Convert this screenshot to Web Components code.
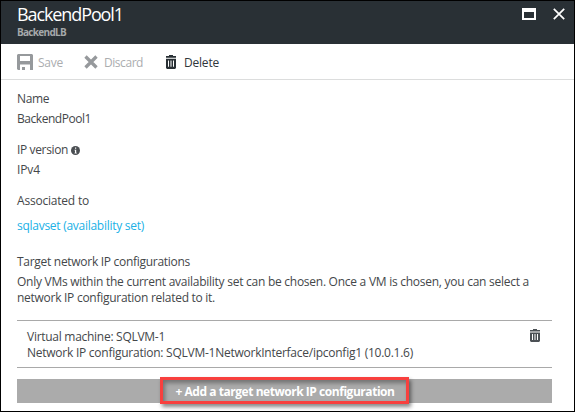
<!DOCTYPE html>
<html lang="en"><head><meta charset="utf-8"><title>BackendPool1</title>
<style>body{margin:0;background:#fff}</style></head><body>
<pool-blade></pool-blade>
<script>
// One line of text, tracked so that it spans the width given in its "w" attribute.
class FitText extends HTMLElement{
  connectedCallback(){
    if(this.shadowRoot)return;
    this.attachShadow({mode:'open'}).innerHTML=`<style>:host{display:block;white-space:nowrap;width:max-content}span{display:inline-block}</style><span><slot></slot></span>`;
    const s=this.shadowRoot.querySelector('span'),w=+this.getAttribute('w'),n=this.textContent.length;
    s.style.letterSpacing=((w-s.getBoundingClientRect().width)/n)+'px';
  }
}
const icons={
  save:[16,16,'<path fill="currentColor" fill-rule="evenodd" d="M1 0H15L16 1V16H12V13H11V16H9V13H7V16H4V11H13V10H3V16H1L0 15V1ZM3 2V7H13V2Z"/><path fill="currentColor" d="M3 10H13V16H10.500V12.500H5V16H3Z"/><path fill="#fff" d="M3 10.500H13V16H8V13H5.500V16H3Z"/><path fill="currentColor" d="M5 13H8V16H5Z"/>'],
  discard:[14,14,'<path stroke="currentColor" stroke-width="3.300" d="M1.500 1.500L12.500 12.500M12.500 1.500L1.500 12.500"/>'],
  trash:[10,13,'<path fill="currentColor" fill-rule="evenodd" d="M3 0H7V1H10V2.500H0V1H3ZM0 3.500H10V12L9 13H1L0 12ZM2 5V11H3V5ZM4.500 5V11H5.500V5ZM7 5V11H8V5Z"/>'],
  info:[9,9,'<circle cx="4.500" cy="4.500" r="4.500" fill="currentColor"/><path fill="#fff" d="M4 1.500H5.200V2.700H4ZM3.500 3.700H5.200V6.700H5.800V7.400H3.500V6.700H4V4.400H3.500Z"/>'],
  max:[14,12,'<path fill="currentColor" fill-rule="evenodd" d="M0 0H14V12H0ZM2 4V10H12V4Z"/>'],
  close:[12,12,'<path stroke="currentColor" stroke-width="1.700" d="M.8 .8L11.200 11.200M11.200 .8L.8 11.200"/>']
};
class UiIcon extends HTMLElement{
  connectedCallback(){
    const [w,h,p]=icons[this.getAttribute('name')],W=this.getAttribute('w')||w,H=this.getAttribute('h')||h;
    if(!this.shadowRoot)this.attachShadow({mode:'open'}).innerHTML=`<style>:host{display:block;flex:none}svg{display:block}</style><svg width="${W}" height="${H}" viewBox="0 0 ${w} ${h}" preserveAspectRatio="none" fill="none">${p}</svg>`;
  }
}
class BladeHeader extends HTMLElement{
  constructor(){super();this.attachShadow({mode:'open'}).innerHTML=`<style>
  :host{display:flex;box-sizing:border-box;height:43px;background:#293035;color:#fff;padding:1px 9px 0 16px}
  .t{flex:1}.title{font-size:18px;line-height:24px}.sub{font-size:10px;line-height:12px;font-weight:700;color:#a5a8aa}
  .w{display:flex;gap:17px;padding-top:6px}</style>
  <div class="t"><fit-text class="title" w="106">BackendPool1</fit-text><fit-text class="sub" w="49">BackendLB</fit-text></div>
  <div class="w"><ui-icon name="max"></ui-icon><ui-icon name="close"></ui-icon></div>`}
}
class CommandBar extends HTMLElement{
  constructor(){super();this.attachShadow({mode:'open'}).innerHTML=`<style>
  :host{display:flex;box-sizing:border-box;height:36px;border-bottom:1px solid #dcdddd;padding:1px 16px 0;align-items:center}
  .c{display:flex;align-items:center;color:#abadaf}.a{color:#30363b}ui-icon{color:#96999c}.a ui-icon{color:#293035}
  fit-text{padding-top:2px}
  .c+.c{margin-left:21px}.c+.a{margin-left:23px}</style>
  <div class="c"><ui-icon name="save"></ui-icon><fit-text w="25" style="margin-left:5px">Save</fit-text></div>
  <div class="c"><ui-icon name="discard"></ui-icon><fit-text w="39" style="margin-left:6px">Discard</fit-text></div>
  <div class="c a"><ui-icon name="trash" h="14"></ui-icon><fit-text w="35" style="margin-left:8px">Delete</fit-text></div>`}
}
class FieldBlock extends HTMLElement{
  constructor(){super();this.attachShadow({mode:'open'}).innerHTML=`<style>
  :host{display:block}.l{display:flex;align-items:center;gap:3px;height:16px;margin-bottom:var(--gap,4px)}</style>
  <div class="l"><slot name="label"></slot></div><slot></slot>`}
}
class ConfigRow extends HTMLElement{
  constructor(){super();this.attachShadow({mode:'open'}).innerHTML=`<style>
  :host{display:flex;box-sizing:border-box;height:48px;border:solid #a9a9a9;border-width:1px 0;padding:8px 12px 0 10px;justify-content:space-between}
  ui-icon{color:#4c5155}</style><div><slot></slot></div><ui-icon name="trash"></ui-icon>`}
}
class AddButton extends HTMLElement{
  constructor(){super();this.attachShadow({mode:'open'}).innerHTML=`<style>
  :host{display:flex;position:relative;height:24px;background:#ababab;color:#fff;font-weight:700;justify-content:center;align-items:center}
  .mark{position:absolute;left:143px;top:-2px;width:243px;height:21px;border:3px solid #f8403e;box-shadow:2px 3px 4px #0007,inset 2px 3px 4px #0005}
  fit-text{position:relative;padding:2px 0 0 1px}</style>
  <div class="mark"></div><fit-text w="219"></fit-text>`;}
  connectedCallback(){
    // The label goes straight into the text element so that its length is known.
    const f=document.createElement('fit-text');f.setAttribute('w','219');f.textContent=this.getAttribute('label');
    this.shadowRoot.querySelector('fit-text').replaceWith(f);
  }
}
class PoolBlade extends HTMLElement{
  constructor(){super();this.attachShadow({mode:'open'}).innerHTML=`<style>
  :host{display:block;box-sizing:border-box;width:575px;height:412px;border:1px solid #000;background:#fff;font:12px/16px "Open Sans","Noto Sans",sans-serif;color:#44474a;overflow:hidden}
  main{padding:11px 22px 0 16px}
  field-block{margin-bottom:15px}.assoc{--gap:9px;margin-bottom:20px}.link{color:#20b1e6}.target{margin-bottom:14px}
  ui-icon{color:#4b4f53}config-row{margin-bottom:11px}</style>
  <blade-header></blade-header><command-bar></command-bar>
  <main>
  <field-block><fit-text slot="label" w="32">Name</fit-text><fit-text w="74">BackendPool1</fit-text></field-block>
  <field-block><fit-text slot="label" w="51">IP version</fit-text><ui-icon slot="label" name="info"></ui-icon><fit-text w="23">IPv4</fit-text></field-block>
  <field-block class="assoc"><fit-text slot="label" w="72">Associated to</fit-text><fit-text class="link" w="127">sqlavset (availability set)</fit-text></field-block>
  <field-block class="target"><fit-text slot="label" w="173">Target network IP configurations</fit-text><fit-text w="512">Only VMs within the current availability set can be chosen. Once a VM is chosen, you can select a</fit-text><fit-text w="198">network IP configuration related to it.</fit-text></field-block>
  <config-row><fit-text w="138">Virtual machine: SQLVM-1</fit-text><fit-text w="386">Network IP configuration: SQLVM-1NetworkInterface/ipconfig1 (10.0.1.6)</fit-text></config-row>
  <add-button label="+ Add a target network IP configuration"></add-button>
  </main>`}
}
for(const [n,c] of [['fit-text',FitText],['ui-icon',UiIcon],['blade-header',BladeHeader],['command-bar',CommandBar],['field-block',FieldBlock],['config-row',ConfigRow],['add-button',AddButton],['pool-blade',PoolBlade]])customElements.define(n,c);
</script></body></html>
